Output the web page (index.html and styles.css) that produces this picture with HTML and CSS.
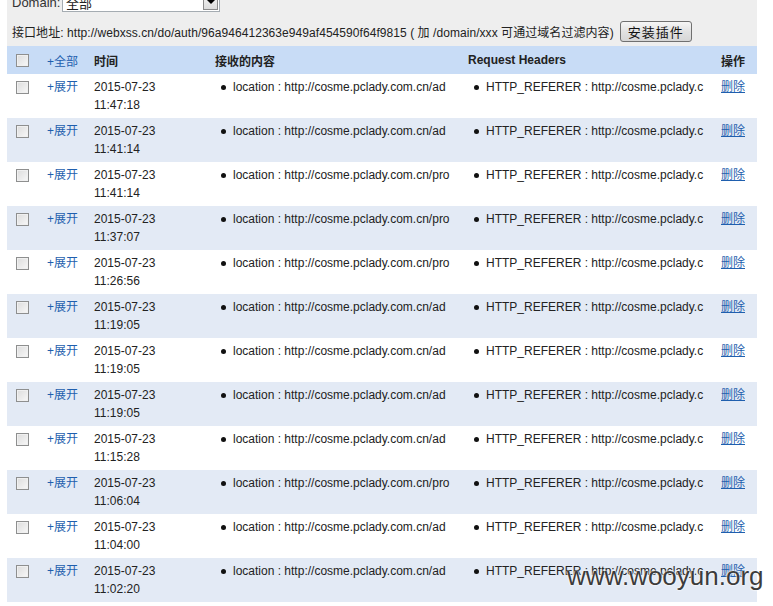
FILE: index.html
```html
<!DOCTYPE html>
<html>
<head>
<meta charset="utf-8">
<link rel="stylesheet" href="styles.css">
</head>
<body>
<div class="wrap">
  <div class="bar">
    <div class="line1">
      <span class="lbl">Domain:</span>
      <span class="select"><span class="sel-text">全部</span><span class="sel-btn"><span class="arrow"></span></span></span>
    </div>
    <div class="line2">
      <span class="api">接口地址: http://webxss.cn/do/auth/96a946412363e949af454590f64f9815 ( 加 /domain/xxx 可通过域名过滤内容)</span>
      <span class="btn">安装插件</span>
    </div>
  </div>
  <table class="grid">
    <colgroup>
      <col class="c1"><col class="c2"><col class="c3"><col class="c4"><col class="c5"><col class="c6">
    </colgroup>
    <thead>
      <tr>
        <th><span class="cb"></span></th>
        <th class="all"><a class="lnk">+全部</a></th>
        <th>时间</th>
        <th>接收的内容</th>
        <th>Request Headers</th>
        <th>操作</th>
      </tr>
    </thead>
    <tbody>
      <tr><td><span class="cb"></span></td><td><a class="lnk">+展开</a></td><td>2015-07-23<br>11:47:18</td><td><div class="li">location : http://cosme.pclady.com.cn/ad</div></td><td><div class="li">HTTP_REFERER : http://cosme.pclady.c</div></td><td><a class="del">删除</a></td></tr>
      <tr><td><span class="cb"></span></td><td><a class="lnk">+展开</a></td><td>2015-07-23<br>11:41:14</td><td><div class="li">location : http://cosme.pclady.com.cn/ad</div></td><td><div class="li">HTTP_REFERER : http://cosme.pclady.c</div></td><td><a class="del">删除</a></td></tr>
      <tr><td><span class="cb"></span></td><td><a class="lnk">+展开</a></td><td>2015-07-23<br>11:41:14</td><td><div class="li">location : http://cosme.pclady.com.cn/pro</div></td><td><div class="li">HTTP_REFERER : http://cosme.pclady.c</div></td><td><a class="del">删除</a></td></tr>
      <tr><td><span class="cb"></span></td><td><a class="lnk">+展开</a></td><td>2015-07-23<br>11:37:07</td><td><div class="li">location : http://cosme.pclady.com.cn/pro</div></td><td><div class="li">HTTP_REFERER : http://cosme.pclady.c</div></td><td><a class="del">删除</a></td></tr>
      <tr><td><span class="cb"></span></td><td><a class="lnk">+展开</a></td><td>2015-07-23<br>11:26:56</td><td><div class="li">location : http://cosme.pclady.com.cn/pro</div></td><td><div class="li">HTTP_REFERER : http://cosme.pclady.c</div></td><td><a class="del">删除</a></td></tr>
      <tr><td><span class="cb"></span></td><td><a class="lnk">+展开</a></td><td>2015-07-23<br>11:19:05</td><td><div class="li">location : http://cosme.pclady.com.cn/ad</div></td><td><div class="li">HTTP_REFERER : http://cosme.pclady.c</div></td><td><a class="del">删除</a></td></tr>
      <tr><td><span class="cb"></span></td><td><a class="lnk">+展开</a></td><td>2015-07-23<br>11:19:05</td><td><div class="li">location : http://cosme.pclady.com.cn/ad</div></td><td><div class="li">HTTP_REFERER : http://cosme.pclady.c</div></td><td><a class="del">删除</a></td></tr>
      <tr><td><span class="cb"></span></td><td><a class="lnk">+展开</a></td><td>2015-07-23<br>11:19:05</td><td><div class="li">location : http://cosme.pclady.com.cn/ad</div></td><td><div class="li">HTTP_REFERER : http://cosme.pclady.c</div></td><td><a class="del">删除</a></td></tr>
      <tr><td><span class="cb"></span></td><td><a class="lnk">+展开</a></td><td>2015-07-23<br>11:15:28</td><td><div class="li">location : http://cosme.pclady.com.cn/ad</div></td><td><div class="li">HTTP_REFERER : http://cosme.pclady.c</div></td><td><a class="del">删除</a></td></tr>
      <tr><td><span class="cb"></span></td><td><a class="lnk">+展开</a></td><td>2015-07-23<br>11:06:04</td><td><div class="li">location : http://cosme.pclady.com.cn/pro</div></td><td><div class="li">HTTP_REFERER : http://cosme.pclady.c</div></td><td><a class="del">删除</a></td></tr>
      <tr><td><span class="cb"></span></td><td><a class="lnk">+展开</a></td><td>2015-07-23<br>11:04:00</td><td><div class="li">location : http://cosme.pclady.com.cn/ad</div></td><td><div class="li">HTTP_REFERER : http://cosme.pclady.c</div></td><td><a class="del">删除</a></td></tr>
      <tr><td><span class="cb"></span></td><td><a class="lnk">+展开</a></td><td>2015-07-23<br>11:02:20</td><td><div class="li">location : http://cosme.pclady.com.cn/ad</div></td><td><div class="li">HTTP_REFERER : http://cosme.pclady.c</div></td><td><a class="del">删除</a></td></tr>
    </tbody>
  </table>
</div>
<div class="watermark">www.wooyun.org</div>
</body>
</html>
```

FILE: styles.css
```css
html, body {
  margin: 0;
  padding: 0;
  background: #ffffff;
}
body {
  font-family: "Liberation Sans", Arial, "Noto Sans CJK SC", sans-serif;
  font-size: 12px;
  color: #222222;
  position: relative;
  overflow: hidden;
  height: 606px;
}
.wrap {
  margin-left: 7px;
  width: 750px;
  background: #eeeeee;
}
.bar {
  padding-left: 5px;
  height: 46px;
  display: flex;
  flex-direction: column;
}
.line1 {
  margin-top: -8px;
  height: 20px;
  display: flex;
  align-items: center;
  font-size: 13px;
}
.lbl {
  color: #333;
  width: 50px;
}
.select {
  display: flex;
  width: 156px;
  height: 18px;
  border: 1px solid #a5acb2;
  background: #fff;
  align-items: center;
  justify-content: space-between;
}
.sel-text {
  padding-left: 3px;
  font-size: 13px;
}
.sel-btn {
  width: 15px;
  height: 16px;
  margin-right: 1px;
  box-sizing: border-box;
  border: 1px solid #8a8a8a;
  background: linear-gradient(#f4f4f4, #dcdcdc);
  display: flex;
  align-items: center;
  justify-content: center;
}
.arrow {
  width: 0;
  height: 0;
  border-left: 4px solid transparent;
  border-right: 4px solid transparent;
  border-top: 4px solid #000;
}
.line2 {
  margin-top: 8px;
  height: 22px;
  display: flex;
  align-items: center;
}
.api {
  color: #222;
  letter-spacing: 0.06px;
}
.btn {
  margin-left: 6px;
  width: 72px;
  height: 21px;
  box-sizing: border-box;
  border: 1px solid #707070;
  border-radius: 3px;
  background: linear-gradient(#f6f6f6, #e2e2e2 50%, #d6d6d6);
  display: flex;
  align-items: center;
  justify-content: center;
  font-size: 13px;
  letter-spacing: 1px;
  color: #111;
}
.grid {
  width: 750px;
  border-collapse: collapse;
  table-layout: fixed;
}
.c1 { width: 33px; }
.c2 { width: 47px; }
.c3 { width: 121px; }
.c4 { width: 253px; }
.c5 { width: 253px; }
.c6 { width: 43px; }
.grid th {
  background: #c8dcf6;
  height: 28px;
  padding: 0 0 0 7px;
  text-align: left;
  font-weight: bold;
  color: #222;
  white-space: nowrap;
  vertical-align: middle;
}
.grid th.all {
  font-weight: normal;
}
.grid td {
  height: 44px;
  box-sizing: border-box;
  padding: 4px 0 4px 7px;
  vertical-align: top;
  line-height: 18px;
  white-space: nowrap;
  overflow: hidden;
}
.grid tbody tr {
  background: #ffffff;
}
.grid tbody tr:nth-child(even) {
  background: #e3eaf5;
}
.cb {
  display: block;
  width: 13px;
  height: 13px;
  box-sizing: border-box;
  margin-left: 2px;
  border: 1px solid #8e8f8f;
  background: linear-gradient(135deg, #dcdcdc, #f8f8f8);
  box-shadow: inset 0 0 0 1px #f0f0f0;
}
.grid td .cb {
  margin-top: 3px;
}
.lnk {
  color: #1f5fae;
  text-decoration: none;
}
.del {
  color: #1f5fae;
  text-decoration: underline;
}
.li {
  position: relative;
  padding-left: 18px;
  overflow: hidden;
}
.li::before {
  content: "";
  position: absolute;
  left: 6px;
  top: 7px;
  width: 5px;
  height: 5px;
  border-radius: 50%;
  background: #111;
}
.watermark {
  position: absolute;
  left: 567px;
  top: 561px;
  font-family: "Liberation Sans", Arial, sans-serif;
  font-size: 26px;
  line-height: 30px;
  color: #3c3c3c;
  text-shadow: 0 0 2px #fff, 0 0 2px #fff;
}
```
